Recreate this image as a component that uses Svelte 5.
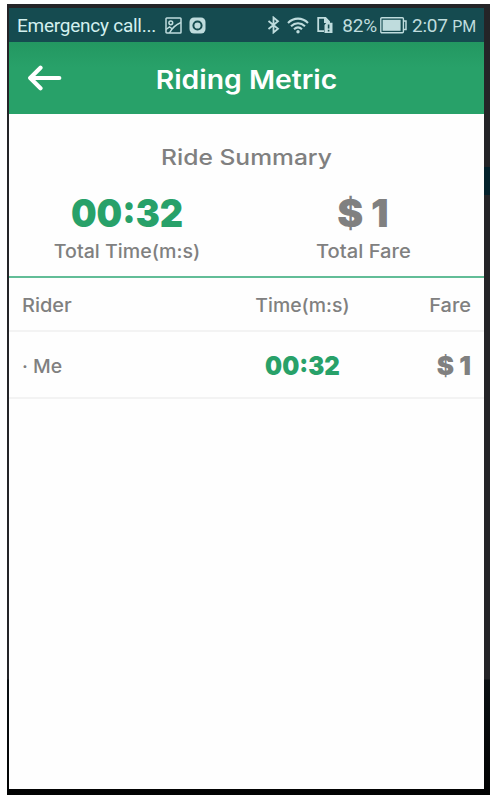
<!--
  App.svelte — Riding Metric screen: status bar, header, ride summary and riders list.
-->
<script>
  const summary = { time: '00:32', fare: '$ 1' };

  const riders = [{ name: 'Me', time: '00:32', fare: '$ 1' }];
</script>

<div class="device">
  <div class="screen">
    <div class="status">
      <span class="status__carrier">Emergency call...</span>
      <svg class="status__image" width="17" height="17" viewBox="0 0 17 17" fill="none" stroke="currentColor" stroke-width="1.5">
        <rect x="1" y="1" width="15" height="15" rx="0.8" />
        <circle cx="5.8" cy="5.8" r="1.9" />
        <path d="M1 12.5 L4.5 10 L7.5 12 M4.5 16 C7 11 11 7.5 16 5.5" />
      </svg>
      <svg class="status__record" width="17" height="17" viewBox="0 0 17 17">
        <rect x="0.5" y="0.5" width="16" height="16" rx="4.5" fill="currentColor" />
        <circle cx="8.5" cy="8.5" r="4.1" fill="none" stroke="#174d50" stroke-width="2" />
      </svg>
      <div class="status__right">
        <svg class="status__bt" width="13" height="18" viewBox="0 0 13 18" fill="none" stroke="currentColor" stroke-width="1.8">
          <path d="M1.5 5 L11 12.8 L6.5 16.5 V1.5 L11 5.2 L1.5 13" />
        </svg>
        <svg class="status__wifi" width="22" height="17" viewBox="0 0 22 17" fill="none" stroke="currentColor" stroke-width="2.1">
          <path d="M1 6 C6.8 0.2 15.2 0.2 21 6 M4 9.2 C8.2 5.2 13.8 5.2 18 9.2 M7 12.2 C9.4 10 12.6 10 15 12.2" />
          <circle cx="11" cy="14.7" r="1.7" fill="currentColor" stroke="none" />
        </svg>
        <svg class="status__sim" width="16" height="18" viewBox="0 0 16 18">
          <path d="M7 15.2 H1.2 V1.9 H8.5 L12 5.5 V7" fill="none" stroke="currentColor" stroke-width="1.8" />
          <path d="M7 1.9 H9 L12.5 5.5 V7 H7 Z" fill="currentColor" />
          <path d="M7.5 9 L9.5 6.8 H15.5 V17 H7.5 Z" fill="currentColor" />
          <path d="M11.6 8.5 V12.5 M11.6 13.8 V15.4" stroke="#174d50" stroke-width="1.6" />
        </svg>
        <span class="status__percent">82%</span>
        <svg class="status__battery" width="27" height="17" viewBox="0 0 27 17">
          <rect x="0.8" y="0.8" width="22.6" height="15" rx="1" fill="none" stroke="currentColor" stroke-width="1.4" />
          <rect x="2.6" y="2.8" width="18" height="11" fill="currentColor" />
          <path d="M24 4 H26 V12.6 H24" fill="none" stroke="currentColor" stroke-width="1.5" />
        </svg>
        <span class="status__clock">2:07 <small>PM</small></span>
      </div>
    </div>

    <header class="header">
      <svg class="header__back" width="34" height="26" viewBox="0 0 34 26" fill="none" stroke="#fff" stroke-width="4.2" stroke-linecap="round" stroke-linejoin="round">
        <path d="M31.3 13 H2.5 M12.5 2.7 L2.2 13 L12.5 23.2" />
      </svg>
      <h1>Riding Metric</h1>
    </header>

    <section class="summary">
      <h2>Ride Summary</h2>
      <div class="summary__totals">
        <div class="total">
          <strong class="total__time">{summary.time}</strong>
          <span class="total__time-label">Total Time(m:s)</span>
        </div>
        <div class="total">
          <strong class="total__fare">{summary.fare}</strong>
          <span class="total__fare-label">Total Fare</span>
        </div>
      </div>
    </section>

    <div class="row row--head">
      <span class="row__rider">Rider</span>
      <span class="row__time">Time(m:s)</span>
      <span class="row__fare">Fare</span>
    </div>
    {#each riders as rider}
      <div class="row row--rider">
        <span class="row__rider">· {rider.name}</span>
        <strong class="row__time">{rider.time}</strong>
        <strong class="row__fare">{rider.fare}</strong>
      </div>
    {/each}
  </div>
</div>

<style>
  :global(body) {
    background: #fff;
  }

  .device {
    box-sizing: border-box;
    width: 483px;
    height: 791px;
    margin: 4px 0 0 7px;
    padding: 4px 6px 6px 2px;
    background:
      linear-gradient(#04222c, #04222c) right 163px / 6px 28px no-repeat,
      linear-gradient(#242427 0, #242427 675px, #0b1013 676px, #020303 100%);
    font-family: Inter, "Liberation Sans", sans-serif;
    color: #808080;
    white-space: nowrap;
  }

  .screen {
    height: 781px;
    background: #fefefe;
    overflow: hidden;
  }

  .status {
    display: flex;
    align-items: center;
    height: 34px;
    padding: 0 8px;
    background: #154b50;
    color: #bfdcdd;
    font-family: Roboto, sans-serif;
    font-size: 19px;
  }

  .status__carrier {
    width: 148px;
    color: #d3f0ef;
    letter-spacing: -0.25px;
  }

  .status__record {
    margin-left: 7px;
  }

  .status__right {
    display: flex;
    align-items: center;
    margin-left: auto;
  }

  .status__wifi {
    margin-left: 7px;
  }

  .status__sim {
    margin-left: 8px;
  }

  .status__percent {
    margin-left: 9px;
    letter-spacing: -0.2px;
  }

  .status__battery {
    margin-left: 3px;
  }

  .status__clock {
    margin-left: 5px;
    letter-spacing: -0.2px;
  }

  .status__clock small {
    font-size: 16px;
  }

  .header {
    display: grid;
    grid-template-columns: 64px 1fr 64px;
    align-items: center;
    height: 72px;
    background: linear-gradient(#239761, #28a169 35%);
    color: #fff;
  }

  .header__back {
    margin-left: 19px;
  }

  h1 {
    margin: 2px 0 0;
    font-size: 26px;
    font-weight: 600;
    text-align: center;
    transform: scaleX(1.09);
  }

  .summary {
    box-sizing: border-box;
    height: 164px;
    padding-top: 29px;
    border-bottom: 2px solid #62bd97;
    text-align: center;
  }

  h2 {
    margin: 0;
    font-size: 21.5px;
    font-weight: 500;
    line-height: 28px;
    transform: scaleX(1.145);
  }

  .summary__totals {
    display: grid;
    grid-template-columns: 236px 1fr;
  }

  .total {
    display: flex;
    flex-direction: column;
  }

  .total strong {
    height: 56px;
    font-size: 39px;
    font-weight: 900;
    line-height: 84px;
  }

  .total span {
    margin-top: 11px;
    font-size: 18.5px;
    font-weight: 500;
    line-height: 26px;
    transform: scaleX(1.06);
  }

  .total .total__fare {
    padding-right: 3px;
  }

  .total .total__fare-label {
    padding-right: 2px;
    transform: scaleX(1.09);
  }

  .total__time,
  strong.row__time {
    color: #28a169;
    transform: scaleX(0.925);
  }

  .row {
    display: grid;
    grid-template-columns: 200px 161px 1fr;
    align-items: center;
    box-sizing: border-box;
    padding: 0 13px;
    border-bottom: 2px solid #f3f3f3;
    font-size: 18.5px;
    font-weight: 500;
  }

  .row--head {
    height: 54px;
    padding-top: 1px;
  }

  .row--rider {
    height: 67px;
    padding-top: 2px;
  }

  .row span {
    transform: scaleX(1.05);
  }

  .row--head .row__rider,
  .row--head .row__fare {
    transform: scaleX(1.08);
  }

  .row__rider {
    transform-origin: left;
  }

  .row__time {
    text-align: center;
  }

  .row__fare {
    text-align: right;
    transform-origin: right;
  }

  .row strong {
    font-size: 26px;
    font-weight: 900;
  }
</style>
